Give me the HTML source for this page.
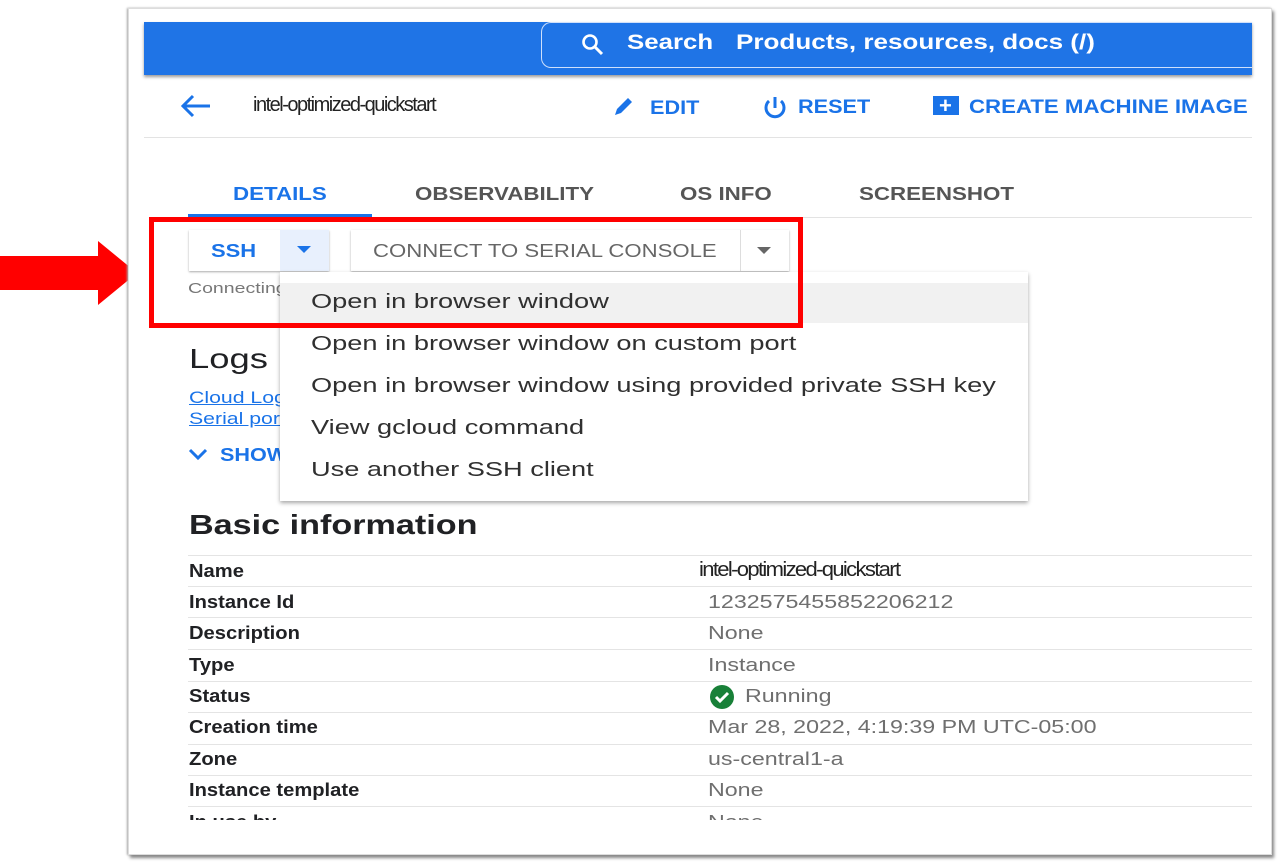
<!DOCTYPE html>
<html><head><meta charset="utf-8"><style>
*{margin:0;padding:0;box-sizing:border-box}
body{width:1281px;height:868px;background:#fff;position:relative;overflow:hidden;font-family:"Liberation Sans",sans-serif}
.a{position:absolute;white-space:nowrap}
.s{transform:scaleX(var(--k));transform-origin:0 0}
.frame{position:absolute;left:128px;top:8px;width:1144px;height:847px;background:#fff;border:1px solid #ddd;box-shadow:2px 3px 3px #888, -1px 0 2px #aaa}
.blue{color:#1a73e8}
.row{position:absolute;left:188px;width:1064px;height:1px;background:#e4e4e4}
.k{position:absolute;left:189px;font-size:18px;color:#202124;font-weight:bold;white-space:nowrap;transform:scaleX(1.12);transform-origin:0 0}
.v{position:absolute;left:708px;font-size:18px;color:#6f6f6f;white-space:nowrap;transform:scaleX(1.29);transform-origin:0 0}
.mi{position:absolute;left:311px;font-size:20px;color:#303030;white-space:nowrap;transform:scaleX(1.36);transform-origin:0 0}
</style></head><body>
<svg class="a" style="left:0;top:240px" width="140" height="68"><polygon points="0,16 98,16 98,1 137,33 98,65 98,50 0,50" fill="#f00"/></svg>
<div class="frame"></div>
<div class="a" style="left:144px;top:22px;width:1108px;height:53px;background:#1f74e6;box-shadow:0 2px 3px #999"></div>
<div class="a" style="left:541px;top:22px;width:711px;height:46px;border:1px solid #cfe0fb;border-right:none;border-radius:10px 0 0 10px"></div>
<svg class="a" style="left:580px;top:32px" width="26" height="24"><circle cx="10" cy="10" r="6.5" fill="none" stroke="#fff" stroke-width="2.6"/><line x1="15" y1="15" x2="22" y2="22" stroke="#fff" stroke-width="3"/></svg>
<div class="a s" style="--k:1.23;left:627px;top:31px;font-size:21px;font-weight:bold;color:#fff">Search</div>
<div class="a s" style="--k:1.24;left:736px;top:31px;font-size:21px;font-weight:bold;color:#fff">Products, resources, docs (/)</div>
<div class="a" style="left:144px;top:137px;width:1108px;height:1px;background:#e3e3e3"></div>
<svg class="a" style="left:178px;top:93px" width="36" height="26"><path d="M32 13H5M15 3L5 13L15 23" fill="none" stroke="#1a73e8" stroke-width="3"/></svg>
<div class="a s" style="--k:1.0;left:253px;top:94px;font-size:20px;color:#222;letter-spacing:-1.5px">intel-optimized-quickstart</div>
<svg class="a" style="left:612px;top:96px" width="26" height="22"><path d="M3 19l2-6L16 2l4 4L9 17z" fill="#1a73e8"/></svg>
<div class="a blue s" style="--k:1.14;left:650px;top:98px;font-size:19px;font-weight:bold">EDIT</div>
<svg class="a" style="left:761px;top:95px" width="28" height="26"><path d="M8 6A9 9 0 1 0 20 6" fill="none" stroke="#1a73e8" stroke-width="3"/><line x1="14" y1="2" x2="14" y2="13" stroke="#1a73e8" stroke-width="3"/></svg>
<div class="a blue s" style="--k:1.14;left:798px;top:97px;font-size:19px;font-weight:bold">RESET</div>
<div class="a" style="left:933px;top:96px;width:26px;height:19px;background:#1a73e8"></div>
<div class="a" style="left:939px;top:93px;font-size:22px;font-weight:bold;color:#fff">+</div>
<div class="a blue s" style="--k:1.17;left:969px;top:97px;font-size:19px;font-weight:bold">CREATE MACHINE IMAGE</div>
<div class="a blue s" style="--k:1.24;left:233px;top:184px;font-size:18px;font-weight:bold">DETAILS</div>
<div class="a s" style="--k:1.24;left:415px;top:184px;font-size:18px;font-weight:bold;color:#555">OBSERVABILITY</div>
<div class="a s" style="--k:1.24;left:680px;top:184px;font-size:18px;font-weight:bold;color:#555">OS INFO</div>
<div class="a s" style="--k:1.24;left:859px;top:184px;font-size:18px;font-weight:bold;color:#555">SCREENSHOT</div>
<div class="a" style="left:188px;top:214px;width:184px;height:3px;background:#1a73e8"></div>
<div class="a" style="left:372px;top:217px;width:880px;height:1px;background:#e3e3e3"></div>
<div class="a" style="left:189px;top:230px;width:140px;height:41px;box-shadow:0 1px 2px #aaa"></div>
<div class="a" style="left:280px;top:230px;width:49px;height:41px;background:#e8f0fd"></div>
<div class="a blue s" style="--k:1.22;left:211px;top:241px;font-size:18px;font-weight:bold">SSH</div>
<svg class="a" style="left:297px;top:246px" width="14" height="8"><path d="M0 0h14L7 7z" fill="#1a73e8"/></svg>
<div class="a" style="left:351px;top:230px;width:438px;height:41px;box-shadow:0 1px 2px #aaa"></div>
<div class="a" style="left:740px;top:230px;width:1px;height:41px;background:#ddd"></div>
<div class="a s" style="--k:1.23;left:373px;top:241px;font-size:18px;color:#666">CONNECT TO SERIAL CONSOLE</div>
<svg class="a" style="left:757px;top:247px" width="14" height="8"><path d="M0 0h14L7 7z" fill="#666"/></svg>
<div class="a s" style="--k:1.3;left:188px;top:280px;font-size:15px;color:#777">Connecting</div>
<div class="a s" style="--k:1.3;left:189px;top:343px;font-size:28px;color:#202124">Logs</div>
<div class="a blue s" style="--k:1.25;left:189px;top:388px;font-size:17px;text-decoration:underline">Cloud Logging</div>
<div class="a blue s" style="--k:1.25;left:189px;top:409px;font-size:17px;text-decoration:underline">Serial port</div>
<svg class="a" style="left:188px;top:448px" width="22" height="14"><path d="M2 2l8 8 8-8" fill="none" stroke="#1a73e8" stroke-width="3"/></svg>
<div class="a blue s" style="--k:1.2;left:220px;top:445px;font-size:18px;font-weight:bold">SHOW MORE</div>
<div class="a" style="left:280px;top:272px;width:748px;height:229px;background:#fff;box-shadow:0 2px 4px rgba(0,0,0,.35)"></div>
<div class="a" style="left:280px;top:283px;width:748px;height:40px;background:#f1f1f1"></div>
<div class="mi" style="top:291px">Open in browser window</div>
<div class="mi" style="top:333px">Open in browser window on custom port</div>
<div class="mi" style="top:375px">Open in browser window using provided private SSH key</div>
<div class="mi" style="top:417px">View gcloud command</div>
<div class="mi" style="top:459px">Use another SSH client</div>
<div class="a" style="left:149px;top:217px;width:654px;height:111px;border:5px solid #f00"></div>
<div class="a s" style="--k:1.22;left:189px;top:509px;font-size:28px;color:#202124;font-weight:bold">Basic information</div>
<div class="row" style="top:555px"></div><div class="row" style="top:586px"></div><div class="row" style="top:617px"></div><div class="row" style="top:649px"></div><div class="row" style="top:681px"></div><div class="row" style="top:712px"></div><div class="row" style="top:744px"></div><div class="row" style="top:775px"></div><div class="row" style="top:806px"></div>
<div class="k" style="top:561px">Name</div>
<div class="a s" style="--k:1.1;left:699px;top:559px;font-size:20px;color:#222;letter-spacing:-1.5px">intel-optimized-quickstart</div>
<div class="k" style="top:592px">Instance Id</div><div class="v" style="top:592px">1232575455852206212</div>
<div class="k" style="top:623px">Description</div><div class="v" style="top:623px">None</div>
<div class="k" style="top:655px">Type</div><div class="v" style="top:655px">Instance</div>
<div class="k" style="top:686px">Status</div>
<svg class="a" style="left:709px;top:685px" width="26" height="24"><circle cx="13" cy="12" r="12" fill="#188038"/><path d="M7 12l4 4 8-8" fill="none" stroke="#fff" stroke-width="3"/></svg>
<div class="v" style="left:745px;top:686px">Running</div>
<div class="k" style="top:717px">Creation time</div><div class="v" style="top:717px">Mar 28, 2022, 4:19:39 PM UTC-05:00</div>
<div class="k" style="top:749px">Zone</div><div class="v" style="top:749px">us-central1-a</div>
<div class="k" style="top:780px">Instance template</div><div class="v" style="top:780px">None</div>
<div class="a" style="left:188px;top:812px;width:1064px;height:8px;overflow:hidden"><div class="k" style="left:1px;top:0">In use by</div><div class="v" style="left:520px;top:0">None</div></div>
</body></html>
